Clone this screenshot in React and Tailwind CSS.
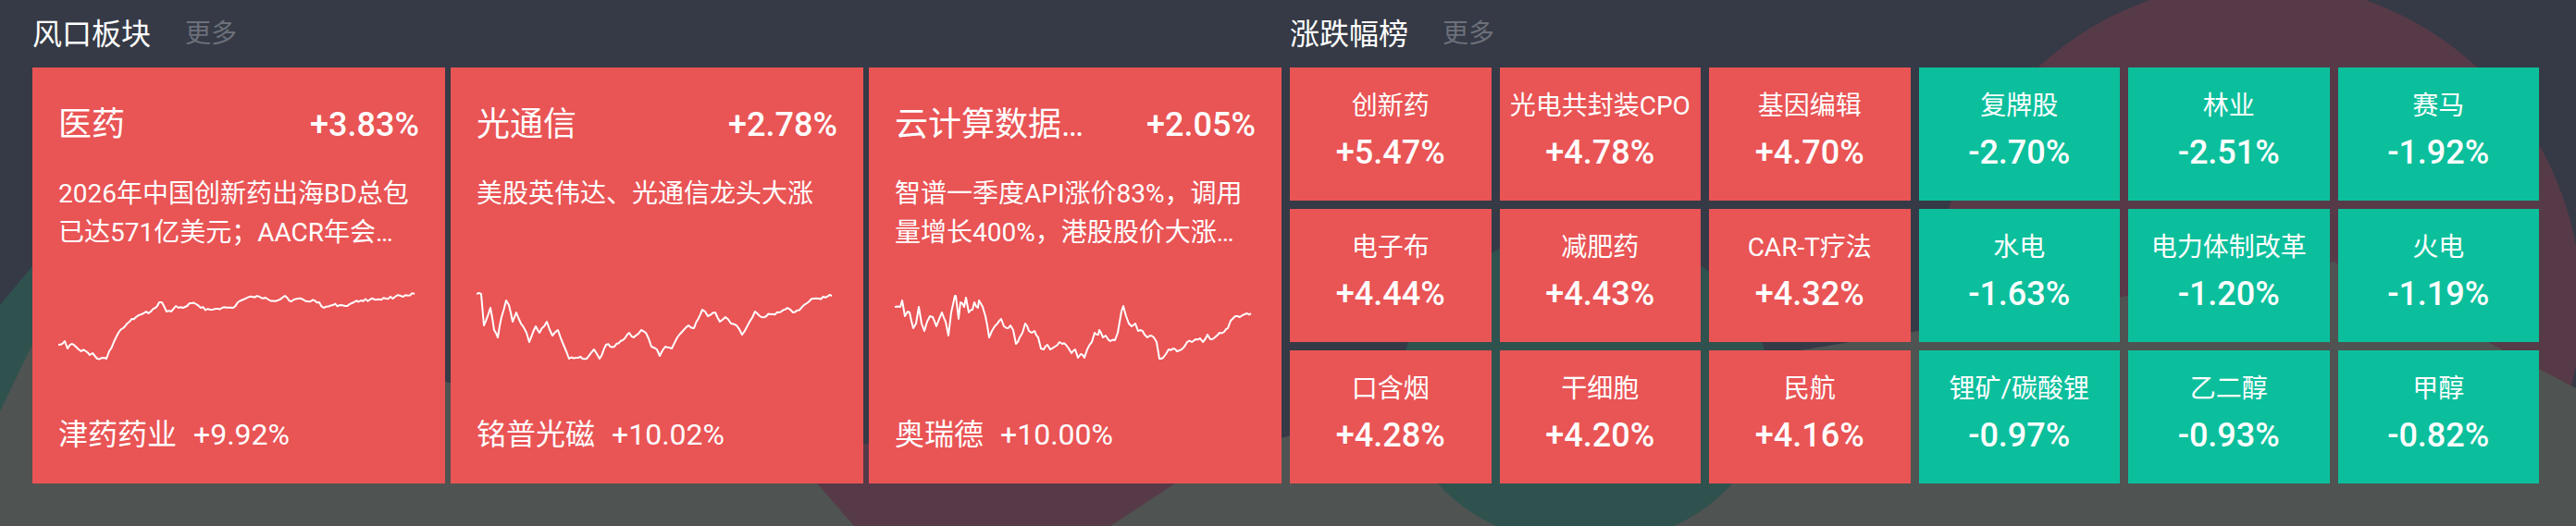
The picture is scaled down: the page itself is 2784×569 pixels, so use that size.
import React from "react";

const FONT = "font-['Roboto','Noto_Sans_CJK_SC',sans-serif]";

const hotSectors = [
    {
        name: "医药",
        change: "+3.83%",
        desc: "2026年中国创新药出海BD总包已达571亿美元；AACR年会即将召开，多款创新药数据发布",
        leader: "津药药业",
        leaderChange: "+9.92%",
        line: [[0,73],[7,69],[10,77],[15,72],[19,75],[22,78],[30,80],[34,84],[37,82],[42,88],[52,88],[55,80],[60,70],[65,60],[70,55],[77,48],[84,43],[90,40],[100,37],[105,33],[109,27],[112,27],[117,37],[122,37],[127,31],[130,33],[137,32],[144,28],[149,29],[154,33],[164,35],[170,34],[177,33],[189,33],[194,27],[200,24],[210,21],[224,22],[227,24],[237,25],[245,20],[252,26],[259,23],[270,26],[277,25],[282,27],[287,33],[297,30],[304,30],[310,31],[317,28],[327,25],[337,24],[354,23],[364,21],[370,20],[385,18]],
    },
    {
        name: "光通信",
        change: "+2.78%",
        desc: "美股英伟达、光通信龙头大涨",
        leader: "铭普光磁",
        leaderChange: "+10.02%",
        line: [[0,18],[5,18],[8,52],[15,33],[19,57],[23,65],[27,43],[32,25],[35,30],[39,48],[43,38],[48,50],[54,60],[57,70],[64,53],[68,60],[76,48],[82,63],[88,57],[94,73],[100,88],[110,87],[119,88],[127,78],[133,88],[140,73],[149,75],[158,68],[165,60],[170,65],[178,57],[183,60],[189,75],[195,78],[198,85],[204,75],[211,77],[217,65],[223,58],[229,52],[235,55],[244,35],[250,42],[258,38],[263,48],[269,43],[275,50],[281,52],[287,62],[293,52],[301,37],[308,43],[318,40],[327,38],[336,33],[342,38],[351,33],[357,28],[364,23],[370,23],[379,21],[384,20]],
    },
    {
        name: "云计算数据中心",
        change: "+2.05%",
        desc: "智谱一季度API涨价83%，调用量增长400%，港股股价大涨，算力需求持续提升",
        leader: "奥瑞德",
        leaderChange: "+10.00%",
        line: [[0,32],[6,32],[8,25],[11,42],[14,37],[16,38],[20,55],[23,50],[26,32],[29,50],[32,58],[35,48],[38,42],[41,43],[45,53],[48,45],[51,38],[55,48],[58,63],[61,38],[65,20],[66,20],[69,45],[71,27],[75,32],[77,22],[80,38],[84,35],[86,27],[90,33],[91,25],[95,32],[98,42],[102,65],[105,58],[108,53],[111,50],[115,45],[118,53],[121,55],[125,52],[128,57],[131,72],[135,65],[138,60],[141,50],[145,58],[148,60],[151,58],[155,65],[158,77],[161,78],[165,73],[168,78],[173,75],[178,70],[181,72],[185,73],[188,77],[191,82],[195,78],[198,87],[201,83],[205,87],[208,78],[213,70],[216,60],[220,62],[221,57],[225,65],[228,63],[233,69],[238,68],[241,60],[245,37],[247,31],[250,42],[253,50],[256,53],[260,50],[263,58],[266,57],[270,62],[273,65],[276,63],[280,65],[283,70],[286,88],[290,87],[293,83],[296,78],[301,77],[305,80],[310,78],[313,75],[316,70],[321,70],[325,67],[330,66],[333,70],[338,62],[341,67],[346,65],[351,60],[356,59],[360,55],[363,47],[368,42],[373,43],[378,40],[381,39],[385,39]],
    },
];

const movers = [
    { name: "创新药", change: "+5.47%", up: true },
    { name: "光电共封装CPO", change: "+4.78%", up: true },
    { name: "基因编辑", change: "+4.70%", up: true },
    { name: "复牌股", change: "-2.70%", up: false },
    { name: "林业", change: "-2.51%", up: false },
    { name: "赛马", change: "-1.92%", up: false },
    { name: "电子布", change: "+4.44%", up: true },
    { name: "减肥药", change: "+4.43%", up: true },
    { name: "CAR-T疗法", change: "+4.32%", up: true },
    { name: "水电", change: "-1.63%", up: false },
    { name: "电力体制改革", change: "-1.20%", up: false },
    { name: "火电", change: "-1.19%", up: false },
    { name: "口含烟", change: "+4.28%", up: true },
    { name: "干细胞", change: "+4.20%", up: true },
    { name: "民航", change: "+4.16%", up: true },
    { name: "锂矿/碳酸锂", change: "-0.97%", up: false },
    { name: "乙二醇", change: "-0.93%", up: false },
    { name: "甲醇", change: "-0.82%", up: false },
];

// small seeded jitter so the traced line looks like tick data
function densify(points, seed) {
    let s = seed;
    const rand = () => {
        s = (s * 9301 + 49297) % 233280;
        return s / 233280;
    };
    const out = [];
    for (let i = 0; i < points.length - 1; i++) {
        const [x0, y0] = points[i];
        const [x1, y1] = points[i + 1];
        const steps = Math.max(1, Math.round((x1 - x0) / 2.5));
        for (let k = 0; k < steps; k++) {
            const t = k / steps;
            const jitter = k === 0 ? 0 : (rand() - 0.5) * 3;
            out.push([x0 + (x1 - x0) * t, y0 + (y1 - y0) * t + jitter]);
        }
    }
    out.push(points[points.length - 1]);
    return out;
}

function Sparkline({ points, seed }) {
    const d = densify(points, seed)
        .map(([x, y], i) => `${i ? "L" : "M"}${x.toFixed(1)} ${y.toFixed(1)}`)
        .join(" ");
    return (
        <svg width="389" height="100" viewBox="0 0 389 100" className="block">
            <path d={d} fill="none" stroke="#ffffff" strokeWidth="2" strokeLinejoin="round" />
        </svg>
    );
}

function SectorCard({ item, index }) {
    return (
        <div className="flex h-[450px] flex-col bg-[#e95455] px-[28px] pt-[41px] pb-[33px] text-white">
            <div className="flex h-[43px] items-center justify-between">
                <span className="max-w-[235px] truncate text-[36px] leading-[43px]">{item.name}</span>
                <span className="text-[36px] leading-[43px] font-medium">{item.change}</span>
            </div>
            <p className="mt-[32px] line-clamp-2 h-[84px] pr-[4px] text-[28px] leading-[42px]">{item.desc}</p>
            <div className="mt-[27px]">
                <Sparkline points={item.line} seed={17 + index * 31} />
            </div>
            <div className="mt-auto flex items-center gap-[18px] text-[32px] leading-[40px]">
                <span>{item.leader}</span>
                <span>{item.leaderChange}</span>
            </div>
        </div>
    );
}

function MoverTile({ item }) {
    return (
        <div
            className={
                "flex flex-col items-center justify-center gap-[8px] pb-[8px] text-white " +
                (item.up ? "bg-[#e95455]" : "bg-[#0cbf9c]")
            }
        >
            <span className="text-[28px] leading-[40px] whitespace-nowrap">{item.name}</span>
            <span className="text-[36px] leading-[44px] font-medium">{item.change}</span>
        </div>
    );
}

function SectionHeader({ title }) {
    return (
        <div className="flex h-[73px] items-center gap-[37px]">
            <span className="text-[32px] text-white">{title}</span>
            <span className="text-[28px] text-[#6c707a]">更多</span>
        </div>
    );
}

function Backdrop() {
    return (
        <svg
            className="absolute inset-0"
            width="2784"
            height="569"
            viewBox="0 0 2784 569"
            preserveAspectRatio="none"
        >
            <rect width="2784" height="569" fill="#353a46" />
            <circle cx="2440" cy="330" r="350" fill="#573a48" />
            <polygon points="0,330 40,282 140,282 0,450" fill="#2f524f" />
            <polygon
                points="0,445 70,300 800,500 1280,500 1400,470 2522,283 2784,420 2784,569 0,569"
                fill="#4f5351"
            />
            <ellipse cx="1713" cy="420" rx="200" ry="170" fill="#2f524f" />
            <polygon points="870,480 1300,480 1270,523 1200,569 923,569 883,523" fill="#573a48" />
        </svg>
    );
}

export default function App() {
    return (
        <div className={`relative h-[569px] w-[2784px] overflow-hidden ${FONT}`}>
            <Backdrop />
            <div className="relative flex gap-[9px] pl-[35px]">
                <section className="flex w-[1350px] flex-col">
                    <SectionHeader title="风口板块" />
                    <div className="grid grid-cols-3 gap-[6px]">
                        {hotSectors.map((item, i) => (
                            <SectorCard key={item.name} item={item} index={i} />
                        ))}
                    </div>
                </section>
                <section className="flex w-[1350px] flex-col">
                    <SectionHeader title="涨跌幅榜" />
                    <div className="grid h-[450px] grid-cols-6 grid-rows-3 gap-[9px]">
                        {movers.map((item) => (
                            <MoverTile key={item.name} item={item} />
                        ))}
                    </div>
                </section>
            </div>
        </div>
    );
}
